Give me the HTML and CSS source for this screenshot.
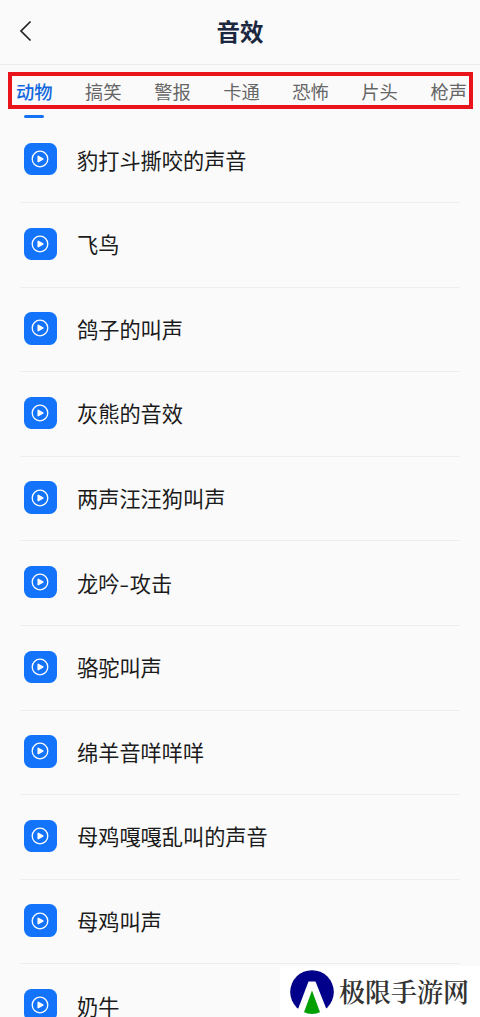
FILE: index.html
```html
<!DOCTYPE html>
<html lang="zh-CN">
<head>
<meta charset="utf-8">
<title>音效</title>
<link rel="stylesheet" href="styles.css">
</head>
<body>
<svg class="defs" aria-hidden="true">
  <symbol id="play" viewBox="0 0 18 18">
    <circle cx="9" cy="9" r="7.8" fill="none" stroke="currentColor" stroke-width="1.3"/>
    <path d="M7.200 6.300 11.800 9 7.200 11.700Z" fill="currentColor" stroke="currentColor" stroke-width="1.500" stroke-linejoin="round"/>
  </symbol>
</svg>
<div class="screen">
  <header class="header">
    <svg class="back" viewBox="0 0 14 22"><path d="M11.5 1.5 2 11l9.500 9.500" fill="none" stroke="currentColor" stroke-width="1.700"/></svg>
    <h1 class="title">音效</h1>
  </header>
  <nav class="tabs">
    <span class="tab active">动物</span>
    <span class="tab">搞笑</span>
    <span class="tab">警报</span>
    <span class="tab">卡通</span>
    <span class="tab">恐怖</span>
    <span class="tab">片头</span>
    <span class="tab">枪声</span>
  </nav>
  <ul class="list">
    <li class="row"><span class="play"><svg><use href="#play"/></svg></span><span class="name">豹打斗撕咬的声音</span></li>
    <li class="row"><span class="play"><svg><use href="#play"/></svg></span><span class="name">飞鸟</span></li>
    <li class="row"><span class="play"><svg><use href="#play"/></svg></span><span class="name">鸽子的叫声</span></li>
    <li class="row"><span class="play"><svg><use href="#play"/></svg></span><span class="name">灰熊的音效</span></li>
    <li class="row"><span class="play"><svg><use href="#play"/></svg></span><span class="name">两声汪汪狗叫声</span></li>
    <li class="row"><span class="play"><svg><use href="#play"/></svg></span><span class="name">龙吟<span class="dash">-</span>攻击</span></li>
    <li class="row"><span class="play"><svg><use href="#play"/></svg></span><span class="name">骆驼叫声</span></li>
    <li class="row"><span class="play"><svg><use href="#play"/></svg></span><span class="name">绵羊音咩咩咩</span></li>
    <li class="row"><span class="play"><svg><use href="#play"/></svg></span><span class="name">母鸡嘎嘎乱叫的声音</span></li>
    <li class="row"><span class="play"><svg><use href="#play"/></svg></span><span class="name">母鸡叫声</span></li>
    <li class="row"><span class="play"><svg><use href="#play"/></svg></span><span class="name">奶牛</span></li>
  </ul>
  <div class="highlight"></div>
  <div class="watermark">
    <svg class="logo" viewBox="0 0 44 44">
      <circle cx="22" cy="22" r="21.800" fill="#00008b"/>
      <path d="M18.500 11.500h7L37 40.500Q30 44 22 44T7.500 40.500Z" fill="#fff"/>
      <path d="M22 20.500 30 42.300Q22 45.500 14 42.300Z" fill="#00a000"/>
    </svg>
    <span class="brand">极限手游网</span>
  </div>
</div>
</body>
</html>
```

FILE: styles.css
```css
* { box-sizing: border-box; }
body {
  margin: 0;
  background: #fafafa;
  font-family: "Noto Sans CJK SC", sans-serif;
  color: #1b1b1b;
}
.defs { display: none; }
.screen {
  position: relative;
  height: 1017px;
  overflow: hidden;
}
.header {
  display: grid;
  grid-template-columns: 1fr auto 1fr;
  align-items: center;
  height: 65px;
  padding: 0 19px 3px;
  border-bottom: 1px solid #ebebeb;
}
.back { width: 14px; height: 22px; color: #222; }
.title {
  margin: 0;
  font-size: 23.5px;
  line-height: 32px;
  font-weight: 700;
  color: #1c2740;
}
.tabs {
  display: flex;
  gap: 32.5px;
  height: 53.4px;
  padding: 12px 0 0 16px;
  white-space: nowrap;
}
.tab {
  display: flex;
  flex: none;
  flex-direction: column;
  align-items: center;
  font-size: 18.3px;
  line-height: 28px;
  color: #666;
}
.tab.active { color: #1368de; font-weight: 500; }
.tab.active::after {
  content: "";
  width: 20px;
  height: 3px;
  margin-top: 10px;
  border-radius: 1.5px;
  background: #1672f5;
}
.list {
  margin: 0;
  padding: 0 20px;
  list-style: none;
}
.row {
  display: flex;
  align-items: center;
  gap: 20.5px;
  height: 84.6px;
  padding: 0 4px 2px;
  border-bottom: 1px solid #eee;
}
.play {
  display: grid;
  place-items: center;
  width: 32.5px;
  height: 32.5px;
  border-radius: 7.5px;
  background: #1374fb;
  color: #fff;
}
.play svg { width: 18px; height: 18px; }
.name { padding-top: 1px; font-size: 21.2px; line-height: 22px; }
.dash { display: inline-block; width: 10.4px; text-align: center; transform: scaleX(1.35); }
.highlight {
  position: absolute;
  left: 8px;
  top: 72px;
  width: 465px;
  height: 37px;
  border: 4px solid #e9131b;
}
.watermark {
  position: absolute;
  right: 0;
  bottom: 0;
  display: flex;
  align-items: center;
  gap: 5px;
  width: 200px;
  height: 51px;
  padding-left: 10px;
  background: #fff;
}
.logo { width: 44px; height: 44px; }
.brand {
  font-family: "Noto Serif CJK SC", "Noto Sans CJK SC", serif;
  font-size: 26px;
  line-height: 34px;
  padding-bottom: 2px;
  font-weight: 600;
  color: #333;
}
```
